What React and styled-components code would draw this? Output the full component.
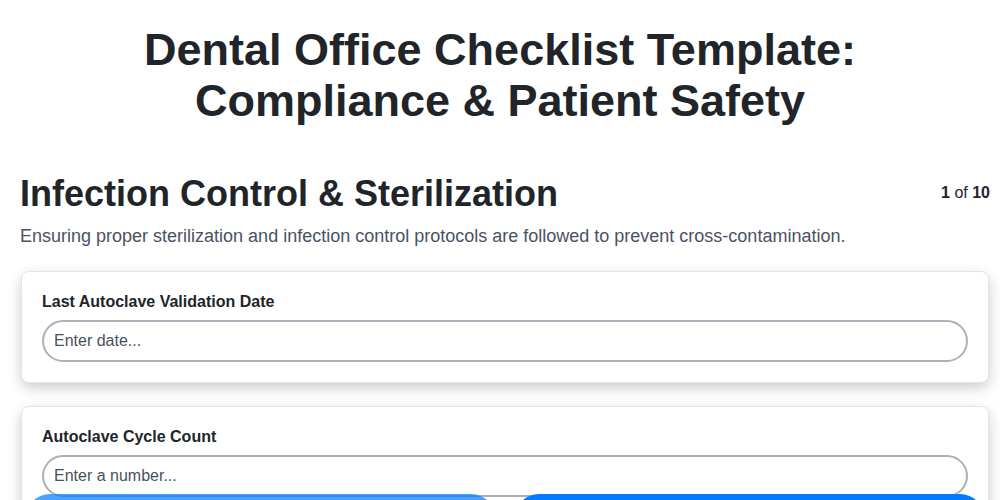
import React from 'react'
import styled, { createGlobalStyle } from 'styled-components'

const GlobalStyle = createGlobalStyle`
  * { box-sizing: border-box; }
  body {
    margin: 0;
    background: #ffffff;
    font-family: "Liberation Sans", Arial, sans-serif;
    color: #212529;
  }
`;

const Page = styled.div`
  padding: 25px 10px 80px;
`;

const Title = styled.h1`
  margin: 0 0 45px;
  font-size: 45px;
  line-height: 1.13;
  font-weight: 700;
  text-align: center;
  color: #212529;
`;

const Section = styled.section`
  padding-left: 10px;
`;

const SectionHead = styled.div`
  display: flex;
  align-items: center;
  justify-content: space-between;
`;

const SectionTitle = styled.h2`
  margin: 0;
  font-size: 36px;
  line-height: 1.2;
  font-weight: 700;
  color: #212529;
`;

const Counter = styled.div`
  font-size: 16px;
  color: #212529;
  b { font-weight: 700; }
`;

const Description = styled.p`
  margin: 8px 0 21px;
  font-size: 18px;
  line-height: 1.5;
  color: #4a5262;
`;

const Card = styled.div`
  background: #fff;
  border: 1px solid #e4e4ec;
  border-radius: 8px;
  padding: 21px 20px 20px;
  margin: 0 1px 23px;
  box-shadow: 0 5px 14px rgba(0, 0, 0, 0.2);
`;

const Label = styled.label`
  display: block;
  font-size: 16px;
  line-height: 18px;
  font-weight: 700;
  margin-bottom: 9px;
  color: #212529;
`;

const Input = styled.input`
  display: block;
  width: 100%;
  height: 42px;
  padding: 0 10px;
  border: 2px solid #a9b1ba;
  border-radius: 21px;
  font-family: inherit;
  font-size: 16px;
  color: #212529;
  background: #fff;
  outline: none;
  &::placeholder { color: #4a5060; }
`;

const Footer = styled.div`
  position: fixed;
  left: 0;
  right: 0;
  bottom: -56px;
  display: flex;
  gap: 18px;
  padding: 0 15px 0 25px;
`;

const NavButton = styled.button`
  flex: 1;
  height: 62px;
  padding-top: 24px;
  border: none;
  border-radius: 25px;
  background: #007bff;
  color: #fff;
  font-family: inherit;
  font-size: 16px;
  font-weight: 700;
  opacity: ${({ disabled }) => (disabled ? 0.7 : 1)};
`;

const fields = [
  { label: 'Last Autoclave Validation Date', placeholder: 'Enter date...' },
  { label: 'Autoclave Cycle Count', placeholder: 'Enter a number...' },
  { label: 'Spore Test Result', placeholder: 'Enter result...' },
];

export default function App() {
  return (
    <>
      <GlobalStyle />
      <Page>
        <Title>
          Dental Office Checklist Template:
          <br />
          Compliance &amp; Patient Safety
        </Title>
        <Section>
          <SectionHead>
            <SectionTitle>Infection Control &amp; Sterilization</SectionTitle>
            <Counter>
              <b>1</b> of <b>10</b>
            </Counter>
          </SectionHead>
          <Description>
            Ensuring proper sterilization and infection control protocols are followed to prevent cross-contamination.
          </Description>
          {fields.map((f) => (
            <Card key={f.label}>
              <Label>{f.label}</Label>
              <Input placeholder={f.placeholder} />
            </Card>
          ))}
        </Section>
      </Page>
      <Footer>
        <NavButton disabled>Previous</NavButton>
        <NavButton>Next</NavButton>
      </Footer>
    </>
  );
}
